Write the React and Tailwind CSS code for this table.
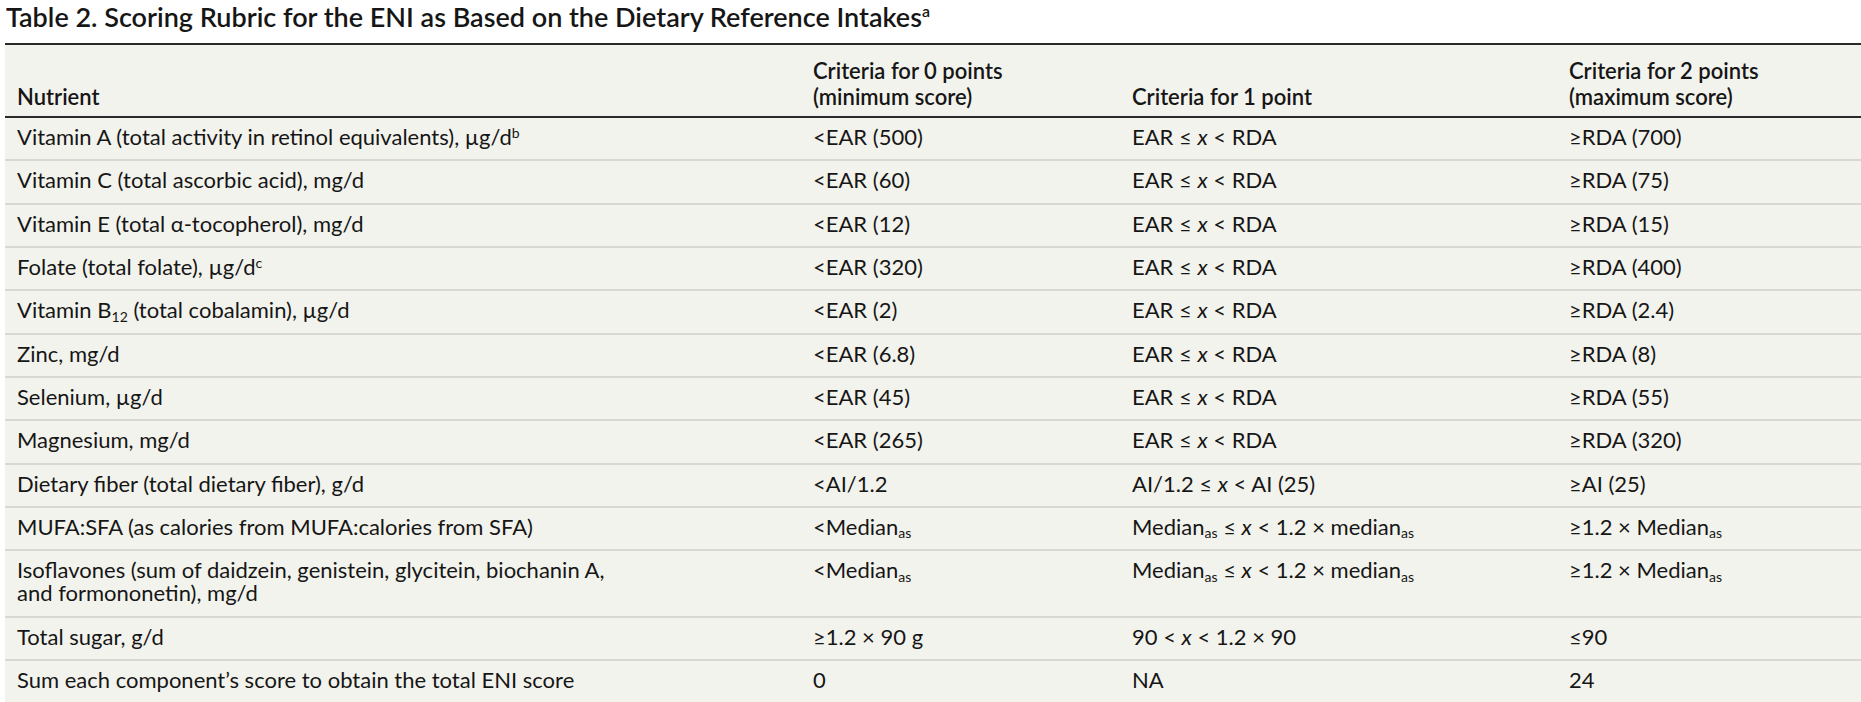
const X = () => <i>x</i>;
const Med = ({ lower }) => (
  <>
    {lower ? "median" : "Median"}
    <sub className="text-[14px]">as</sub>
  </>
);

const rows = [
  [
    <>Vitamin A (total activity in retinol equivalents), µg/d<sup className="text-[14px]">b</sup></>,
    "<EAR (500)",
    <>EAR ≤ <X /> &lt; RDA</>,
    "≥RDA (700)",
  ],
  ["Vitamin C (total ascorbic acid), mg/d", "<EAR (60)", <>EAR ≤ <X /> &lt; RDA</>, "≥RDA (75)"],
  ["Vitamin E (total α-tocopherol), mg/d", "<EAR (12)", <>EAR ≤ <X /> &lt; RDA</>, "≥RDA (15)"],
  [
    <>Folate (total folate), µg/d<sup className="text-[14px]">c</sup></>,
    "<EAR (320)",
    <>EAR ≤ <X /> &lt; RDA</>,
    "≥RDA (400)",
  ],
  [
    <>Vitamin B<sub className="text-[14px]">12</sub> (total cobalamin), µg/d</>,
    "<EAR (2)",
    <>EAR ≤ <X /> &lt; RDA</>,
    "≥RDA (2.4)",
  ],
  ["Zinc, mg/d", "<EAR (6.8)", <>EAR ≤ <X /> &lt; RDA</>, "≥RDA (8)"],
  ["Selenium, µg/d", "<EAR (45)", <>EAR ≤ <X /> &lt; RDA</>, "≥RDA (55)"],
  ["Magnesium, mg/d", "<EAR (265)", <>EAR ≤ <X /> &lt; RDA</>, "≥RDA (320)"],
  ["Dietary fiber (total dietary fiber), g/d", "<AI/1.2", <>AI/1.2 ≤ <X /> &lt; AI (25)</>, "≥AI (25)"],
  [
    "MUFA:SFA (as calories from MUFA:calories from SFA)",
    <>&lt;<Med /></>,
    <><Med /> ≤ <X /> &lt; 1.2 × <Med lower /></>,
    <>≥1.2 × <Med /></>,
  ],
  [
    <>Isoflavones (sum of daidzein, genistein, glycitein, biochanin A,<br />and formononetin), mg/d</>,
    <>&lt;<Med /></>,
    <><Med /> ≤ <X /> &lt; 1.2 × <Med lower /></>,
    <>≥1.2 × <Med /></>,
  ],
  ["Total sugar, g/d", "≥1.2 × 90 g", <>90 &lt; <X /> &lt; 1.2 × 90</>, "≤90"],
  ["Sum each component’s score to obtain the total ENI score", "0", "NA", "24"],
];

export default function App() {
  return (
    <div className="w-[1861px] h-[702px] overflow-hidden bg-white text-[#161616] font-['Lato','Liberation_Sans',sans-serif]">
      <h1 className="pl-[6px] text-[27px] leading-[34px] font-semibold">
        Table 2. Scoring Rubric for the ENI as Based on the Dietary Reference Intakes
        <sup className="text-[16px] -top-[0.6em]">a</sup>
      </h1>

      <div className="ml-[5px] mt-[9px] bg-[#f3f3ed] border-t-2 border-[#2a2a2a] text-[22px]">
        <div className="grid grid-cols-[796px_319px_437px_1fr] h-[73px] items-end border-b-2 border-[#2a2a2a] font-semibold leading-[26.7px]">
          <div className="pl-3 pb-[5px]">Nutrient</div>
          <div className="pl-3 pb-[5px]">
            Criteria for 0 points
            <br />
            (minimum score)
          </div>
          <div className="pl-3 pb-[5px]">Criteria for 1 point</div>
          <div className="pl-3 pb-[5px]">
            Criteria for 2 points
            <br />
            (maximum score)
          </div>
        </div>

        {rows.map((r, i) => (
          <div
            key={i}
            className="grid grid-cols-[796px_319px_437px_1fr] pt-[7px] pb-[11.33px] leading-[23px] border-b-2 border-[#d8d8d1]"
          >
            {r.map((c, j) => (
              <div key={j} className="pl-3">
                {c}
              </div>
            ))}
          </div>
        ))}
      </div>
    </div>
  );
}
